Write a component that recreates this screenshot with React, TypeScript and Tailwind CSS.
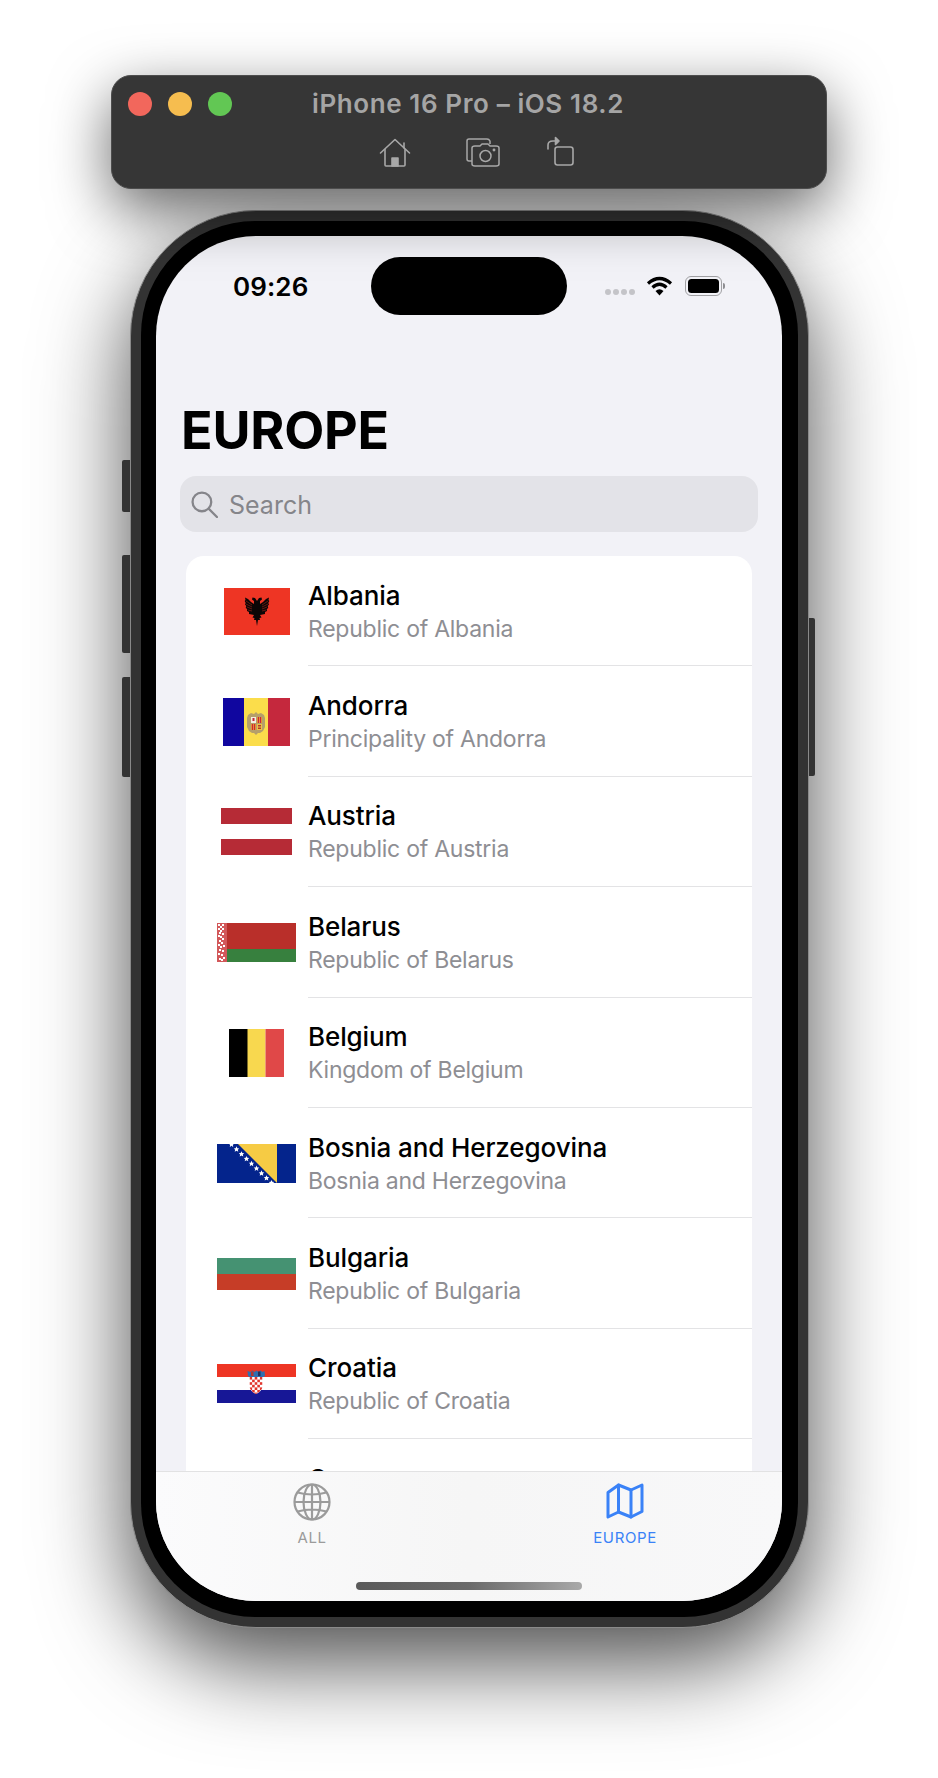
import React from "react";

const font = { fontFamily: "Inter, 'Liberation Sans', sans-serif" };

function Albania() {
  const half =
    "M33 13L31 10L28.500 9.500L28 11.500L30 13L30 16L27 14L24 11L21 9.500L21.500 12L20.700 13L21.700 15L21 16.500L22.300 18L21.700 20L23.200 21L23 23L25 24L25 26L27.500 26.500L30 27L28.500 29.500L30.500 30L30 32L32 32L33 38Z";
  return (
    <svg width="66" height="47" viewBox="0 0 66 47">
      <rect width="66" height="47" fill="#ee3524" />
      <path fill="#0b0606" d={half} />
      <path fill="#0b0606" d={half} transform="translate(66 0) scale(-1 1)" />
      <g stroke="#ee3524" strokeWidth="0.4">
        <path d="M22 13l6 4M22 16l6 3M23 19l5 2M24 22l4 1" />
        <path d="M44 13l-6 4M44 16l-6 3M43 19l-5 2M42 22l-4 1" />
      </g>
    </svg>
  );
}

function Andorra() {
  return (
    <svg width="67" height="48" viewBox="0 0 67 48">
      <rect width="22" height="48" fill="#10069f" />
      <rect x="21" width="24" height="48" fill="#fbdd4b" />
      <rect x="45" width="22" height="48" fill="#c5283d" />
      <path d="M25 17l3-2 3 1 2-2 2 2 3-1 3 2 1 3v9l-2 4-3 2-2 0-2 2-2-2-2 0-3-2-2-4v-9z" fill="#b59f6a" />
      <rect x="28" y="19" width="5" height="6" fill="#f4efe0" />
      <rect x="29.500" y="20" width="2" height="3" fill="#c5283d" />
      <rect x="34" y="19" width="5" height="6" fill="#e8902f" />
      <rect x="35" y="19" width="1" height="6" fill="#c5283d" />
      <rect x="37" y="19" width="1" height="6" fill="#c5283d" />
      <rect x="28" y="26" width="5" height="6" fill="#e8902f" />
      <rect x="29" y="26" width="1" height="6" fill="#c5283d" />
      <rect x="31" y="26" width="1" height="6" fill="#c5283d" />
      <rect x="34" y="26" width="5" height="6" fill="#eec245" />
      <rect x="35" y="27" width="3" height="1.500" fill="#b3372c" />
      <rect x="35" y="29.500" width="3" height="1.500" fill="#b3372c" />
    </svg>
  );
}

function Austria() {
  return (
    <svg width="71" height="47" viewBox="0 0 71 47">
      <rect width="71" height="16" fill="#b62b36" />
      <rect y="31" width="71" height="16" fill="#b62b36" />
    </svg>
  );
}

function Belarus() {
  const cells = [
    [1, 1], [5, 1], [3, 3], [1, 5], [5, 5], [3, 7], [2, 9], [5, 10], [1, 12], [3, 13], [5, 15], [2, 17], [4, 19],
    [1, 21], [3, 23], [6, 22], [2, 26], [5, 27], [1, 30], [4, 31], [6, 34], [2, 35], [4, 36],
  ];
  return (
    <svg width="79" height="39" viewBox="0 0 79 39">
      <rect x="9" width="70" height="26" fill="#b92f2a" />
      <rect x="9" y="26" width="70" height="13" fill="#37803e" />
      <rect width="10" height="39" fill="#d2585a" />
      {cells.map(([x, y], i) => (
        <rect key={i} x={x} y={y} width="2" height="2" fill="#fff" />
      ))}
    </svg>
  );
}

function Belgium() {
  return (
    <svg width="55" height="48" viewBox="0 0 55 48">
      <rect width="19" height="48" fill="#000" />
      <rect x="18.500" width="18" height="48" fill="#f8d84f" />
      <rect x="36.500" width="18.500" height="48" fill="#e04848" />
    </svg>
  );
}

function Bosnia() {
  const stars = [14, 19, 24, 29, 34, 39, 44, 49, 54];
  return (
    <svg width="79" height="39" viewBox="0 0 79 39">
      <rect width="79" height="39" fill="#04248c" />
      <path d="M21 0h39v39z" fill="#f6cb44" />
      {stars.map((x, i) => {
        const y = i * 4.8 + 0.3;
        return (
          <path
            key={x}
            transform={`translate(${x + 0.5} ${y}) scale(1.2)`}
            fill="#fff"
            d="M0-2.300l.7 1.600 1.600.1-1.200 1.100.4 1.700L0 1.300l-1.500.9.4-1.700-1.200-1.100 1.600-.1z"
          />
        );
      })}
    </svg>
  );
}

function Bulgaria() {
  return (
    <svg width="79" height="32" viewBox="0 0 79 32">
      <rect width="79" height="16" fill="#459272" />
      <rect y="16" width="79" height="16" fill="#c63d27" />
    </svg>
  );
}

function Croatia() {
  const squares: React.ReactNode[] = [];
  for (let r = 0; r < 7; r++) {
    for (let c = 0; c < 5; c++) {
      if ((r + c) % 2 === 0) {
        squares.push(<rect key={`${r}-${c}`} x={32.5 + c * 2.6} y={13 + r * 2.6} width="2.6" height="2.6" fill="#e0352c" />);
      }
    }
  }
  return (
    <svg width="79" height="39" viewBox="0 0 79 39">
      <defs>
        <clipPath id="hr-shield">
          <path d="M32.500 13h13v10q-1 4.500-6.500 7q-5.500-2.500-6.500-7z" />
        </clipPath>
      </defs>
      <rect width="79" height="13" fill="#ee3524" />
      <rect y="26" width="79" height="13" fill="#171796" />
      <path d="M32.500 13h13v10q-1 4.500-6.500 7q-5.500-2.500-6.500-7z" fill="#fff" />
      <g clipPath="url(#hr-shield)">{squares}</g>
      <path d="M30.500 7l3 1 2-1.500 2 1.500 2-1.500 2 1.500 2-1.500 2 1.500 2-1 .5 5-2 1h-13.500l-1.500-1z" fill="#2f6fb0" />
      <rect x="34" y="7.500" width="2.500" height="4.500" fill="#b7332d" />
      <rect x="41" y="7.500" width="2.500" height="4.500" fill="#23305e" />
    </svg>
  );
}

const rows: { name: string; sub: string; flag: React.ReactNode }[] = [
  { name: "Albania", sub: "Republic of Albania", flag: <Albania /> },
  { name: "Andorra", sub: "Principality of Andorra", flag: <Andorra /> },
  { name: "Austria", sub: "Republic of Austria", flag: <Austria /> },
  { name: "Belarus", sub: "Republic of Belarus", flag: <Belarus /> },
  { name: "Belgium", sub: "Kingdom of Belgium", flag: <Belgium /> },
  { name: "Bosnia and Herzegovina", sub: "Bosnia and Herzegovina", flag: <Bosnia /> },
  { name: "Bulgaria", sub: "Republic of Bulgaria", flag: <Bulgaria /> },
  { name: "Croatia", sub: "Republic of Croatia", flag: <Croatia /> },
  { name: "Cyprus", sub: "Republic of Cyprus", flag: null },
];

function Row({ name, sub, flag }: { name: string; sub: string; flag: React.ReactNode }) {
  return (
    <div className="flex h-[110.4px] shrink-0 pl-[31px]">
      <div className="flex w-[79px] shrink-0 items-center justify-center">{flag}</div>
      <div className="ml-[12px] flex flex-1 flex-col justify-center border-b border-[#e3e3e5] pt-[2px]">
        <div className="text-[26px] leading-[32px] font-medium tracking-[-0.1px] text-black">{name}</div>
        <div className="mt-[2px] text-[23px] leading-[30px] font-normal tracking-[-0.25px] text-[#8e8e93]">{sub}</div>
      </div>
    </div>
  );
}

function TitleBar() {
  return (
    <div className="relative z-10 ml-[111px] flex h-[114px] w-[716px] flex-col rounded-[20px] border border-[#4d4d4d] bg-[#363636] shadow-[0_20px_60px_rgba(0,0,0,0.6)]">
      <div className="flex h-[56px] items-center pl-[16px]">
        <span className="h-[24px] w-[24px] rounded-full bg-[#f2675c]" />
        <span className="ml-[16px] h-[24px] w-[24px] rounded-full bg-[#f6bd4f]" />
        <span className="ml-[16px] h-[24px] w-[24px] rounded-full bg-[#62c754]" />
        <span className="ml-[80px] -mt-[1px] text-[26px] font-semibold tracking-[0.6px] whitespace-nowrap text-[#a5a5a5]">
          iPhone 16 Pro – iOS 18.2
        </span>
      </div>
      <div className="flex items-start pt-[6px] pl-[267px]">
        <svg width="32" height="29" viewBox="0 0 32 29" fill="none" stroke="#a8a8a8" strokeWidth="1.600" strokeLinejoin="round" strokeLinecap="round">
          <path d="M1.500 15L16 1.500 30.500 15" />
          <path d="M25 5v5" />
          <path d="M6 11.500V27q0 1 1 1h18q1 0 1-1V11.500" />
          <path d="M13 28v-8h6v8h-6z" fill="#a8a8a8" />
        </svg>
        <svg className="ml-[55px]" width="34" height="29" viewBox="0 0 34 29" fill="none" stroke="#a8a8a8" strokeWidth="1.500" strokeLinejoin="round">
          <path d="M6 23H3q-2 0-2-2V3q0-2 2-2h18q2 0 3 2v3" />
          <path d="M9 8h5l2-2h6l2 2h6q3 0 3 2v16q0 2-3 2H9q-3 0-3-2V10q0-2 3-2z" />
          <circle cx="19.500" cy="18" r="5.500" />
          <circle cx="28" cy="12" r="0.700" fill="#a8a8a8" />
        </svg>
        <svg className="ml-[47px] -mt-[2px]" width="27" height="30" viewBox="0 0 27 30" fill="none" stroke="#a8a8a8" strokeWidth="1.600" strokeLinejoin="round" strokeLinecap="round">
          <rect x="8" y="11" width="18" height="18" rx="2.500" />
          <path d="M1 13V9q0-4 5-4h3" />
          <path d="M8.500 1.500L12 5 8.500 8.500z" fill="#a8a8a8" />
        </svg>
      </div>
    </div>
  );
}

function StatusBar() {
  return (
    <div className="flex h-[58px] shrink-0 items-center">
      <span className="ml-[77px] w-[138px] text-[26px] font-semibold tracking-[0.1px] text-black">09:26</span>
      <div className="h-[58px] w-[196px] rounded-[29px] bg-black" />
      <div className="ml-[38px] flex gap-[2px] pt-[12px]">
        <span className="h-[6px] w-[6px] rounded-full bg-[#c4c4c8]" />
        <span className="h-[6px] w-[6px] rounded-full bg-[#c4c4c8]" />
        <span className="h-[6px] w-[6px] rounded-full bg-[#c4c4c8]" />
        <span className="h-[6px] w-[6px] rounded-full bg-[#c4c4c8]" />
      </div>
      <svg className="ml-[11px]" width="27" height="20" viewBox="0 0 27 20" fill="none" stroke="#000" strokeWidth="3.200">
        <path d="M2 7.500Q13.500-2.500 25 7.500" />
        <path d="M6.500 11.500Q13.500 5 20.500 11.500" />
        <path d="M13.500 19.500L9.500 15Q13.500 11.500 17.500 15z" fill="#000" stroke="none" />
      </svg>
      <div className="ml-[12px] flex items-center">
        <div className="flex h-[20px] w-[37px] rounded-[6px] border-[1.5px] border-[#a0a0a3] p-[2px]">
          <div className="flex-1 rounded-[3.500px] bg-black" />
        </div>
        <div className="ml-[1px] h-[6px] w-[2px] rounded-r-[2px] bg-[#8e8e92]" />
      </div>
    </div>
  );
}

function Globe() {
  return (
    <svg width="38" height="38" viewBox="0 0 38 38" fill="none" stroke="#9b9b9b" strokeWidth="2.200">
      <circle cx="19" cy="19" r="17.500" />
      <ellipse cx="19" cy="19" rx="8.500" ry="17.500" />
      <path d="M19 1.500v35M1.500 19h35M4.500 9.500q14.500 4 29 0M4.500 28.500q14.500-4 29 0" />
    </svg>
  );
}

function MapIcon() {
  return (
    <svg width="38" height="36" viewBox="0 0 38 36" fill="none" stroke="#3a82f7" strokeWidth="3" strokeLinejoin="round" strokeLinecap="round">
      <path d="M2 9.500L12.500 2 25 7l11-5v26.500L25 34 12.500 29 2 34z" />
      <path d="M12.500 2v27M25 7v27" />
    </svg>
  );
}

function TabBar() {
  return (
    <div className="flex h-[130px] shrink-0 flex-col border-t border-[#e2e2e3] bg-gradient-to-r from-[#fbfbfc] via-[#f6f6f6] to-[#f8f8f9]">
      <div className="flex pt-[11px]">
        <div className="ml-[108px] flex w-[96px] flex-col items-center">
          <Globe />
          <span className="mt-[8px] text-[15px] leading-[18px] font-normal tracking-[0.6px] text-[#9b9b9b]">ALL</span>
        </div>
        <div className="ml-[217px] flex w-[96px] flex-col items-center">
          <MapIcon />
          <span className="mt-[10px] text-[15px] leading-[18px] font-normal tracking-[0.6px] text-[#3a82f7]">EUROPE</span>
        </div>
      </div>
      <div className="mt-[35px] ml-[200px] h-[8px] w-[226px] rounded-[4px] bg-gradient-to-r from-[#5a5a5a] via-[#6a6a6a] to-[#a9a9a9]" />
    </div>
  );
}

function Screen() {
  return (
    <div className="flex h-[1365px] w-[626px] flex-col overflow-hidden rounded-[100px] bg-[#f2f2f7]">
      <div className="shrink-0 pt-[21px]">
        <StatusBar />
      </div>
      <div className="min-h-0 flex-1 overflow-hidden">
        <h1 className="mt-[85px] ml-[25px] text-[52px] leading-[62px] font-bold tracking-[-0.2px] text-black">EUROPE</h1>
        <div className="mt-[14px] ml-[24px] flex h-[56px] w-[578px] items-center rounded-[16px] bg-[#e3e3e8] pl-[11px]">
          <svg width="27" height="27" viewBox="0 0 26 26" fill="none" stroke="#85858a" strokeWidth="2.200" strokeLinecap="round">
            <circle cx="10.500" cy="10.500" r="9" />
            <path d="M17 17l8 8" />
          </svg>
          <span className="mt-[3px] ml-[11px] text-[25px] font-normal text-[#85858a]">Search</span>
        </div>
        <div className="mt-[24px] mr-[30px] ml-[30px] rounded-t-[18px] bg-white">
          {rows.map((r) => (
            <Row key={r.name} {...r} />
          ))}
        </div>
      </div>
      <TabBar />
    </div>
  );
}

function Phone() {
  return (
    <div className="relative mt-[21px] ml-[130px] h-[1418px] w-[679px] rounded-[126px] border-[1.5px] border-[#8a8a8a] bg-[#333333] p-[10px] shadow-[0_35px_90px_rgba(0,0,0,0.7)]">
      <div className="absolute top-[249px] -left-[9px] h-[52px] w-[8px] rounded-l-[2px] bg-[#333]" />
      <div className="absolute top-[344px] -left-[9px] h-[98px] w-[8px] rounded-l-[2px] bg-[#333]" />
      <div className="absolute top-[466px] -left-[9px] h-[100px] w-[8px] rounded-l-[2px] bg-[#333]" />
      <div className="absolute top-[407px] -right-[7px] h-[158px] w-[6px] rounded-r-[2px] bg-[#333]" />
      <div className="h-full w-full rounded-[114px] bg-black p-[15px]">
        <Screen />
      </div>
    </div>
  );
}

export default function App() {
  return (
    <div className="h-[1778px] w-[938px] overflow-hidden bg-white pt-[75px]" style={font}>
      <TitleBar />
      <Phone />
    </div>
  );
}
